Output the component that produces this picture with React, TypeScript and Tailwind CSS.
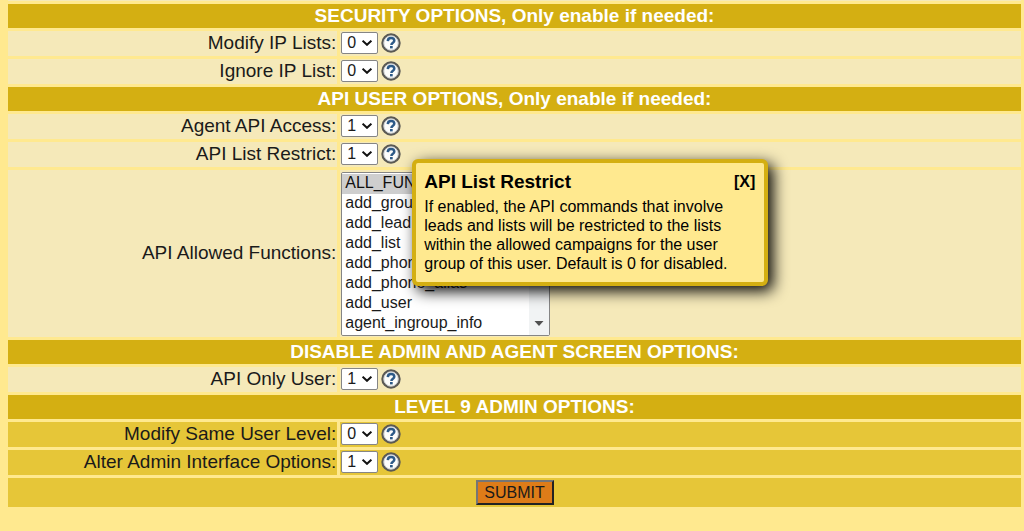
import React from "react";

type FlagRow = { id: string; label: string; value: "0" | "1"; help?: { title: string; text: string } };

const apiFunctions = [
  "ALL_FUNCTIONS",
  "add_group_alias",
  "add_lead",
  "add_list",
  "add_phone",
  "add_phone_alias",
  "add_user",
  "agent_ingroup_info",
  "agent_stats_export",
  "agent_status",
  "audio_playback",
  "blind_monitor",
  "call_agent",
];

function HelpIcon() {
  return (
    <svg viewBox="0 0 20 20" className="block size-5" aria-hidden="true">
      <circle cx="10" cy="10" r="8.6" fill="#fdfdfb" stroke="#5a5954" strokeWidth="2.2" />
      <circle cx="10" cy="10" r="7.2" fill="none" stroke="#b9bec2" strokeWidth="0.8" />
      <path d="M6.8 8.1C6.9 6 8.2 5.1 10 5.1s3.3 0.9 3.3 2.7c0 2-2.9 2-2.9 4.2" fill="none" stroke="#2d5a88" strokeWidth="2.5" />
      <rect x="9" y="13" width="2.7" height="2.4" fill="#2d5a88" />
    </svg>
  );
}

function HelpPopup({ title, text }: { title: string; text: string }) {
  return (
    <div
      role="dialog"
      aria-label={title}
      className="absolute top-[15px] left-full z-10 ml-[11px] w-[356px] rounded-md border-4 border-[#d4af12] bg-[#ffe98f] px-2 pt-[7px] pb-[9px] text-black shadow-[5px_5px_15px_#000000]"
    >
      <div className="flex items-start justify-between pr-px">
        <h2 className="text-[19px] leading-6 font-bold">{title}</h2>
        <button type="button" className="text-base leading-6 font-bold">[X]</button>
      </div>
      <p className="pt-[3px] pr-5 text-base leading-[19px]">{text}</p>
    </div>
  );
}

function SectionRow({ children }: { children: React.ReactNode }) {
  return (
    <tr className="h-6 bg-[#d4af12] text-white">
      <th colSpan={2} scope="colgroup" className="text-center align-top leading-[23px] font-bold">
        {children}
      </th>
    </tr>
  );
}

function OptionRow({ row, dark = false }: { row: FlagRow; dark?: boolean }) {
  const tone = dark ? "bg-[#e6c638]" : "bg-[#f5e9b9]";
  return (
    <tr className="h-[25px]">
      <td className={`${tone} pr-px text-right align-top leading-6`}>
        <label htmlFor={row.id}>{row.label}:</label>
      </td>
      <td className={`${tone} pl-px align-top`}>
        <div className="flex h-6 items-center gap-[3px]">
          <div className="relative">
            <select
              id={row.id}
              defaultValue={row.value}
              className="block h-[22px] w-[37px] appearance-none rounded-xs border border-[#858585] bg-white pl-[5px] text-base leading-5"
            >
              <option>0</option>
              <option>1</option>
            </select>
            <svg viewBox="0 0 10 6" className="pointer-events-none absolute top-2 right-[6px] h-[6px] w-[10px]" aria-hidden="true">
              <path d="M0.6 0.7 5 4.8 9.4 0.7" fill="none" stroke="#111" strokeWidth="2" />
            </svg>
          </div>
          <div className="relative">
            <button type="button" aria-label={`Help: ${row.label}`} className="block">
              <HelpIcon />
            </button>
            {row.help && <HelpPopup title={row.help.title} text={row.help.text} />}
          </div>
        </div>
      </td>
    </tr>
  );
}

export default function App() {
  return (
    <main className="min-h-screen bg-[#ffe98f] pl-[5px] font-['Liberation_Sans',Arial,sans-serif] text-[19px] text-[#1a1a1a]">
      <div className="mx-[3px] h-px bg-[#f5e9b9]" />
      <form onSubmit={(e) => e.preventDefault()}>
        <table className="w-full table-fixed border-separate border-spacing-[3px]">
          <colgroup>
            <col className="w-[32.6%]" />
            <col />
          </colgroup>
          <tbody>
            <SectionRow>SECURITY OPTIONS, Only enable if needed:</SectionRow>
            <OptionRow row={{ id: "modify-ip", label: "Modify IP Lists", value: "0" }} />
            <OptionRow row={{ id: "ignore-ip", label: "Ignore IP List", value: "0" }} />
            <SectionRow>API USER OPTIONS, Only enable if needed:</SectionRow>
            <OptionRow row={{ id: "agent-api", label: "Agent API Access", value: "1" }} />
            <OptionRow
              row={{
                id: "api-list",
                label: "API List Restrict",
                value: "1",
                help: {
                  title: "API List Restrict",
                  text: "If enabled, the API commands that involve leads and lists will be restricted to the lists within the allowed campaigns for the user group of this user. Default is 0 for disabled.",
                },
              }}
            />
            <tr className="h-[167px] bg-[#f5e9b9]">
              <td className="pr-px text-right align-middle">
                <label htmlFor="api-functions">API Allowed Functions:</label>
              </td>
              <td className="pl-px align-middle">
                <div className="relative w-[209px]">
                  <select
                    id="api-functions"
                    multiple
                    size={8}
                    defaultValue={["ALL_FUNCTIONS"]}
                    className="block h-[164px] w-full rounded-xs border border-[#858585] bg-white pt-px text-base"
                  >
                    {apiFunctions.map((name) => (
                      <option key={name} className="h-5 px-[3px] py-0 leading-5">
                        {name}
                      </option>
                    ))}
                  </select>
                  <div className="pointer-events-none absolute inset-y-px right-px flex w-5 items-end justify-center bg-[#f1f3f4] pb-[9px]" aria-hidden="true">
                    <svg viewBox="0 0 10 5" className="block h-[5px] w-[10px]">
                      <path d="M0.5 0h9L5 5z" fill="#505050" />
                    </svg>
                  </div>
                </div>
              </td>
            </tr>
            <SectionRow>DISABLE ADMIN AND AGENT SCREEN OPTIONS:</SectionRow>
            <OptionRow row={{ id: "api-only", label: "API Only User", value: "1" }} />
            <SectionRow>LEVEL 9 ADMIN OPTIONS:</SectionRow>
            <OptionRow dark row={{ id: "same-level", label: "Modify Same User Level", value: "0" }} />
            <OptionRow dark row={{ id: "alter-admin", label: "Alter Admin Interface Options", value: "1" }} />
            <tr className="h-[29px] bg-[#e6c638]">
              <td colSpan={2}>
                <button
                  type="submit"
                  className="mx-auto block h-[25px] w-[78px] border-2 border-t-[#767676] border-r-[#222222] border-b-[#222222] border-l-[#767676] bg-[#de7c18] text-base leading-5"
                >
                  SUBMIT
                </button>
              </td>
            </tr>
          </tbody>
        </table>
      </form>
    </main>
  );
}
